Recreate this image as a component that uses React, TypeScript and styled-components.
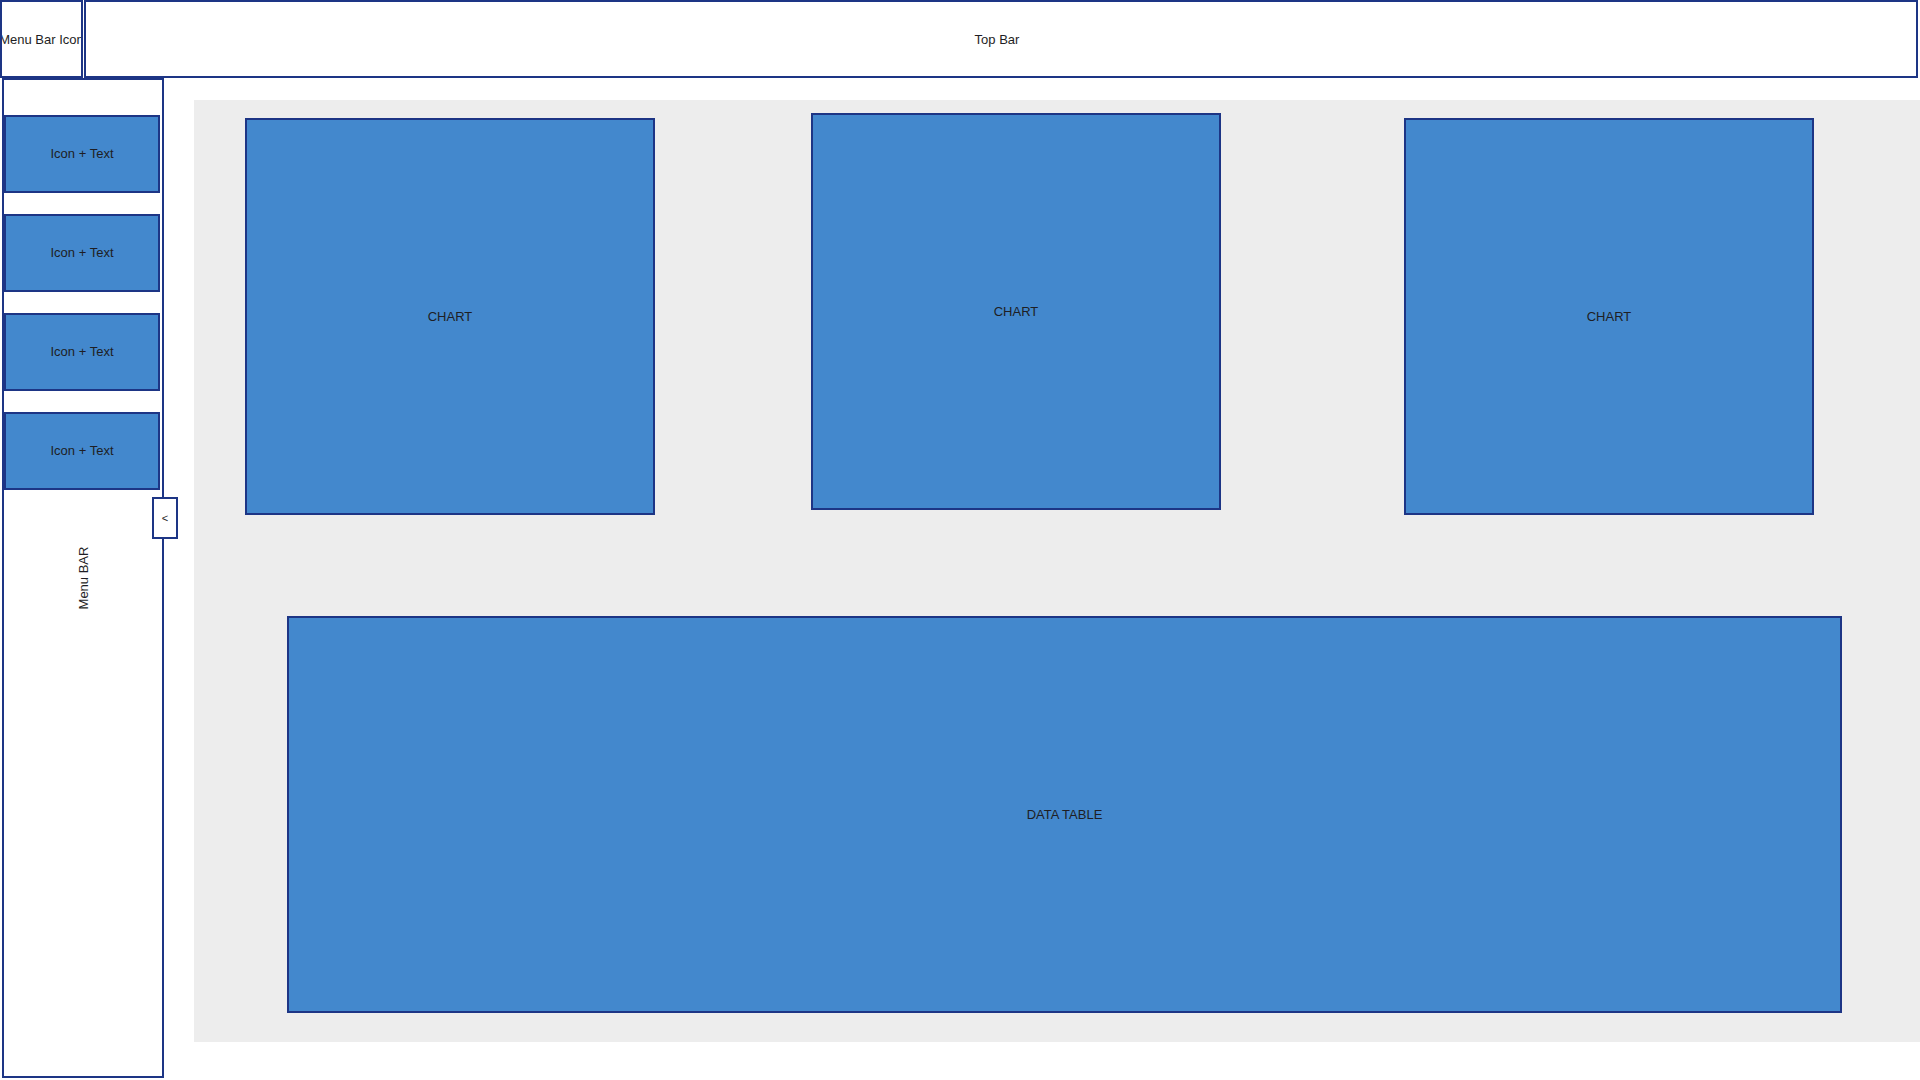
import React from "react";
import styled, { createGlobalStyle } from "styled-components";

const GlobalStyle = createGlobalStyle`
  html, body { margin: 0; padding: 0; background: #ffffff; }
  body {
    font-family: "Liberation Sans", Arial, sans-serif;
    font-size: 13px;
    color: #1e1e24;
  }
  * { box-sizing: border-box; }
`;

const NAVY = "#1d3585";
const BLUE = "#4388cd";

const Page = styled.div`
  width: 1920px;
  height: 1080px;
  display: flex;
  flex-direction: column;
  overflow: hidden;
`;

const Header = styled.header`
  display: flex;
  height: 78px;
  gap: 1px;
`;

const MenuIconBox = styled.div`
  width: 83px;
  height: 78px;
  border: 2px solid ${NAVY};
  display: flex;
  align-items: center;
  justify-content: center;
  overflow: hidden;
  white-space: nowrap;
`;

const TopBar = styled.div`
  width: 1834px;
  height: 78px;
  border: 2px solid ${NAVY};
  display: flex;
  align-items: center;
  justify-content: center;
  padding-right: 8px;
`;

const Body = styled.div`
  display: flex;
  align-items: flex-start;
`;

const Sidebar = styled.nav`
  position: relative;
  margin-left: 2px;
  width: 162px;
  height: 1000px;
  border: 2px solid ${NAVY};
  display: flex;
  flex-direction: column;
  gap: 21px;
  padding-top: 35px;
`;

const NavItem = styled.div`
  width: 156px;
  height: 78px;
  background: ${BLUE};
  border: 2px solid ${NAVY};
  display: flex;
  align-items: center;
  justify-content: center;
  padding-bottom: 1px;
`;

const CollapseButton = styled.button`
  position: absolute;
  right: -16px;
  top: 417px;
  width: 26px;
  height: 42px;
  padding: 0;
  background: #ffffff;
  border: 2px solid ${NAVY};
  font-family: "Liberation Sans", Arial, sans-serif;
  font-size: 11px;
  color: #1e1e24;
  display: flex;
  align-items: center;
  justify-content: center;
`;

const SidebarLabel = styled.span`
  position: absolute;
  left: 50%;
  top: 50%;
  transform: translate(-50%, -50%) rotate(-90deg);
  white-space: nowrap;
`;

const Main = styled.main`
  margin-left: 30px;
  margin-top: 22px;
  width: 1726px;
  height: 942px;
  background: #ededed;
  display: flex;
  flex-direction: column;
  align-items: flex-start;
  padding: 13px 0 0 51px;
`;

const ChartRow = styled.div`
  display: flex;
  align-items: flex-start;
`;

const Chart = styled.div<{ $mt: number; $ml: number }>`
  width: 410px;
  height: 397px;
  margin-top: ${(p) => p.$mt}px;
  margin-left: ${(p) => p.$ml}px;
  background: ${BLUE};
  border: 2px solid ${NAVY};
  display: flex;
  align-items: center;
  justify-content: center;
`;

const DataTable = styled.div`
  margin-top: 101px;
  margin-left: 42px;
  width: 1555px;
  height: 397px;
  background: ${BLUE};
  border: 2px solid ${NAVY};
  display: flex;
  align-items: center;
  justify-content: center;
`;

const charts = [
  { mt: 5, ml: 0 },
  { mt: 0, ml: 156 },
  { mt: 5, ml: 183 },
];

export default function App() {
  return (
    <>
      <GlobalStyle />
      <Page>
        <Header>
          <MenuIconBox>Menu Bar Icon</MenuIconBox>
          <TopBar>Top Bar</TopBar>
        </Header>
        <Body>
          <Sidebar>
            {[0, 1, 2, 3].map((i) => (
              <NavItem key={i}>Icon + Text</NavItem>
            ))}
            <SidebarLabel>Menu BAR</SidebarLabel>
            <CollapseButton>&lt;</CollapseButton>
          </Sidebar>
          <Main>
            <ChartRow>
              {charts.map((c, i) => (
                <Chart key={i} $mt={c.mt} $ml={c.ml}>
                  CHART
                </Chart>
              ))}
            </ChartRow>
            <DataTable>DATA TABLE</DataTable>
          </Main>
        </Body>
      </Page>
    </>
  );
}
